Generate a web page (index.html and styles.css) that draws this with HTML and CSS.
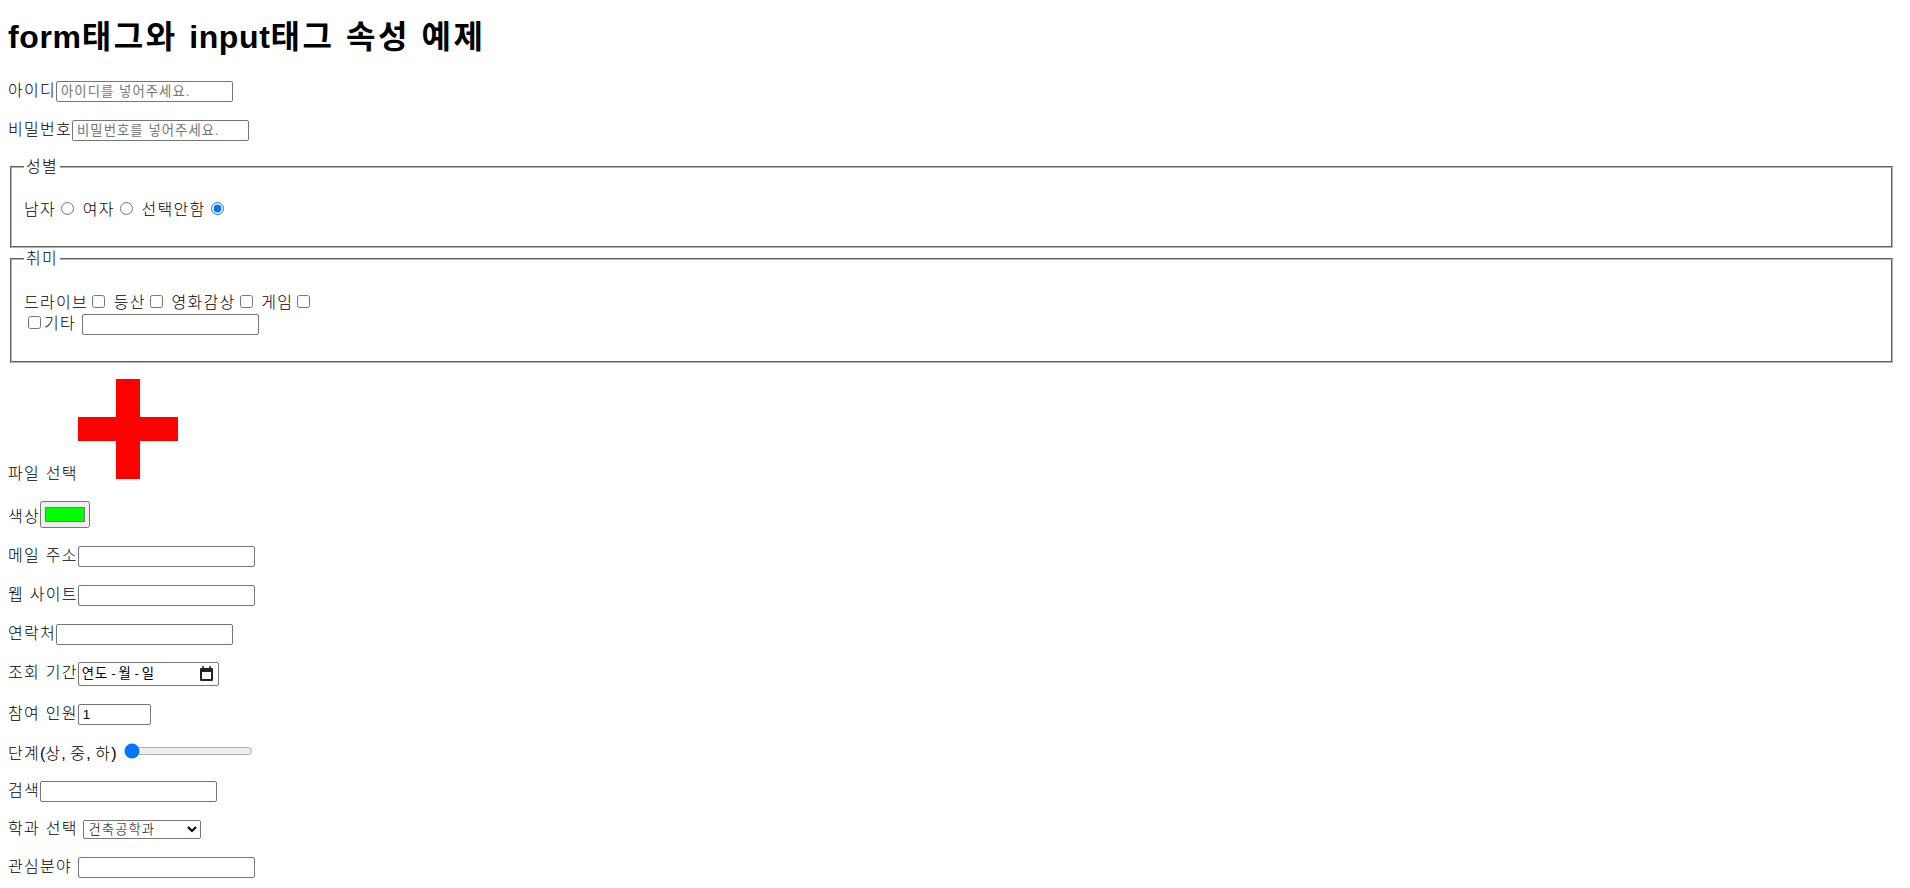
FILE: index.html
```html
<!DOCTYPE html>
<html lang="ko">
<head>
    <meta charset="UTF-8">
    <meta name="viewport" content="width=device-width, initial-scale=1.0">
    <title>form태그와 input태그 속성 예제</title>
    <link rel="stylesheet" href="styles.css">
</head>
<body>
    <h1><span class="latin">form</span>태그와 <span class="latin">input</span>태그 속성 예제</h1>
    <form>
        <p>
            <label for="userId">아이디</label><input type="text" id="userId" placeholder="아이디를 넣어주세요.">
        </p>
        <p>
            <label for="userPw">비밀번호</label><input type="password" id="userPw" placeholder="비밀번호를 넣어주세요.">
        </p>
        <fieldset>
            <legend>성별</legend>
            <p>
                <label for="male">남자</label><input type="radio" name="gender" id="male">
                <label for="female">여자</label><input type="radio" name="gender" id="female">
                <label for="none">선택안함</label><input type="radio" name="gender" id="none" checked>
            </p>
        </fieldset>
        <fieldset>
            <legend>취미</legend>
            <p>
                <label for="drive">드라이브</label><input type="checkbox" id="drive">
                <label for="hike">등산</label><input type="checkbox" id="hike">
                <label for="movie">영화감상</label><input type="checkbox" id="movie">
                <label for="game">게임</label><input type="checkbox" id="game">
                <br>
                <input type="checkbox" id="etc"><label for="etc">기타</label>
                <input type="text" id="etcText">
            </p>
        </fieldset>
        <p>
            <label>파일 선택</label><svg class="plus" width="100" height="100" viewBox="0 0 100 100"><path d="M38 0H62V38H100V62H62V100H38V62H0V38H38Z" fill="#f00"/></svg>
        </p>
        <p>
            <label for="color">색상</label><input type="color" id="color" value="#00ff00">
        </p>
        <p>
            <label for="email">메일 주소</label><input type="email" id="email">
        </p>
        <p>
            <label for="site">웹 사이트</label><input type="url" id="site">
        </p>
        <p>
            <label for="tel">연락처</label><input type="tel" id="tel">
        </p>
        <p>
            <label>조회 기간</label><span class="date-box"><span>연도<span class="date-sep">-</span>월<span class="date-sep">-</span>일</span><svg class="calendar" width="13" height="15" viewBox="0 0 13 15"><path d="M1 3H12V14H1Z" fill="none" stroke="#222" stroke-width="2" stroke-linejoin="round"/><path d="M1 2H12V6H1Z" fill="#222"/><path d="M3 0V2M10 0V2" stroke="#222" stroke-width="1.5"/></svg></span>
        </p>
        <p>
            <label for="people">참여 인원</label><input type="number" id="people" class="number" value="1">
        </p>
        <p class="range-row">
            <label for="level"><span>단계</span><span class="latin">(</span>상<span class="latin">, </span>중<span class="latin">, </span>하<span class="latin">)</span></label>
            <input type="range" id="level" min="0" max="100" value="0">
        </p>
        <p class="search-row">
            <label for="search">검색</label><input type="search" id="search">
        </p>
        <p class="select-row">
            <label for="dept">학과 선택</label>
            <select id="dept">
                <option>건축공학과</option>
                <option>컴퓨터공학과</option>
            </select>
        </p>
        <p class="last">
            <label for="field">관심분야</label>
            <input type="text" id="field">
        </p>
    </form>
</body>
</html>
```

FILE: styles.css
```css
body {
    font-family: "Liberation Sans", "Noto Sans CJK KR", sans-serif;
    line-height: 21px;
    margin: 8px 15px 0 8px;
}
h1 {
    line-height: 42px;
    margin: 8px 0 21px;
}
h1, form p, legend {
    letter-spacing: .08em;
}
h1 .latin {
    letter-spacing: .02em;
}
.latin {
    letter-spacing: 0;
}
label, legend, select {
    font-weight: 300;
}
form p {
    line-height: 23px;
}
fieldset {
    border: 2px groove #b4b4b4;
}
fieldset + fieldset {
    margin-top: 1px;
    padding-top: 7.6px;
}
fieldset p {
    line-height: 21px;
}
legend {
    line-height: 20px;
}
input, select, .date-box {
    font-family: "Liberation Sans", "Noto Sans CJK KR", sans-serif;
    font-size: 13.33px;
    letter-spacing: .08em;
}
input[type="text"], input[type="password"], input[type="email"], input[type="url"], input[type="tel"], input[type="search"], input.number {
    width: 177px;
    height: 21px;
    padding: 1px 4px;
    box-sizing: border-box;
    border: 1px solid #767676;
    border-radius: 2px;
}
input.number {
    width: 73px;
}
input[type="color"] {
    width: 50px;
    height: 27px;
}
input[type="range"] {
    width: 129px;
}
select {
    width: 118px;
    height: 19px;
}
.plus {
    vertical-align: baseline;
}
.date-box {
    display: inline-flex;
    align-items: center;
    justify-content: space-between;
    box-sizing: border-box;
    width: 141px;
    height: 24px;
    padding: 0 5px 0 3px;
    border: 1px solid #767676;
    border-radius: 2px;
    vertical-align: middle;
}
.date-sep {
    display: inline-block;
    width: 10px;
    text-align: center;
    letter-spacing: 0;
}
.range-row {
    line-height: 22px;
    margin-bottom: 14px;
}
.search-row {
    margin-top: 14px;
}
.select-row {
    line-height: 21px;
}
.last {
    margin-bottom: 0;
}
```
